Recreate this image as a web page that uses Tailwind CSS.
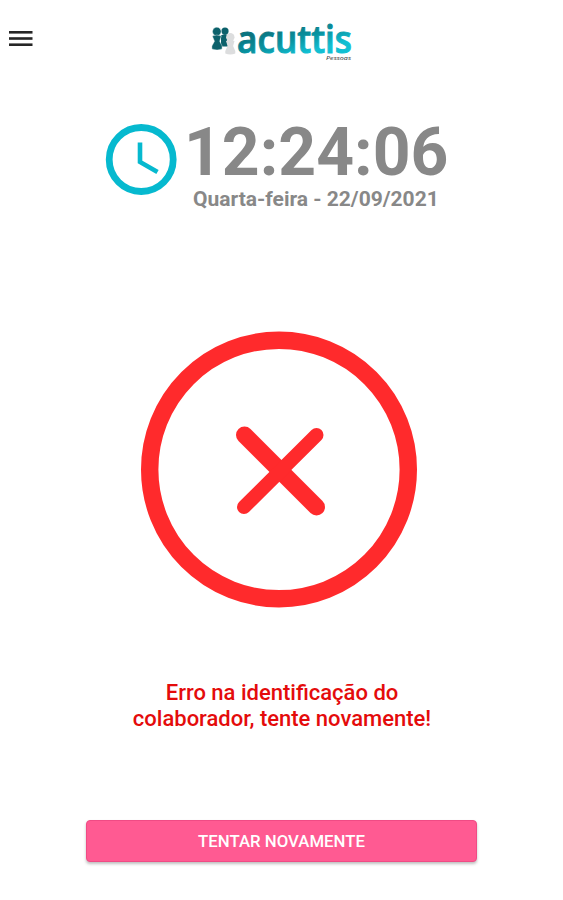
<!DOCTYPE html>
<html lang="pt-BR">

<head>
    <meta charset="UTF-8">
    <meta name="viewport" content="width=device-width, initial-scale=1.0">
    <title>Acuttis - Registro de Ponto</title>
    <script src="https://cdn.jsdelivr.net/npm/@tailwindcss/browser@4"></script>
</head>

<body class="min-h-screen bg-white font-['Roboto',sans-serif]">

    <!-- Header -->
    <header class="grid grid-cols-[200px_1fr_200px] h-[78px]">
        <button class="w-6 h-5 ml-[9px] mt-[29px]" aria-label="Menu">
            <svg viewBox="0 0 24 20" class="block w-6 h-5" fill="#262626">
                <rect x="0" y="2" width="23.5" height="2.6" />
                <rect x="0" y="8.2" width="23.5" height="2.6" />
                <rect x="0" y="14.4" width="23.5" height="2.6" />
            </svg>
        </button>

        <!-- Logo -->
        <svg viewBox="200 15 163 55" class="block w-[163px] h-[55px] mt-[15px] overflow-visible">
            <defs>
                <linearGradient id="logoGradient" gradientUnits="userSpaceOnUse" x1="285" y1="26" x2="293" y2="56">
                    <stop offset="0" stop-color="#0a7480" />
                    <stop offset="0.5" stop-color="#0892a0" />
                    <stop offset="1" stop-color="#12bfd2" />
                </linearGradient>
            </defs>
            <g fill="#0c616b">
                <circle cx="225" cy="31" r="3.6" />
                <path d="M221 35.5q4-3 8 0l-2 5 1 6h-7z" />
                <g stroke="#fff" stroke-width="0.4">
                    <circle cx="216.8" cy="31.5" r="4.3" />
                    <path d="M212.3 36q4.5-2 9 0l-1.6 5.2 2.4 4.8v3q-5 2-10.2 0v-3l2.6-4.8z" />
                </g>
            </g>
            <g fill="#dcddde">
                <circle cx="230.3" cy="37.2" r="4.2" />
                <path d="M226 41q4-2 8.5 0l-1.4 5 2.2 5v2.6q-5 2-10 0V51l2.3-5z" />
            </g>
            <text x="237" y="53.2" textLength="115" lengthAdjust="spacingAndGlyphs" fill="url(#logoGradient)"
                stroke="url(#logoGradient)" stroke-width="1" font-family="Open Sans, sans-serif" font-size="38"
                font-weight="600">acuttis</text>
            <text x="326" y="59.5" textLength="25" lengthAdjust="spacingAndGlyphs" fill="#333"
                font-family="Open Sans, sans-serif" font-size="5" font-style="italic">Pessoas</text>
        </svg>
    </header>

    <main class="flex flex-col items-center">

        <!-- Clock -->
        <section class="flex gap-[7px] mt-[46px] w-[351px] h-[90px] text-[#888]">
            <svg viewBox="0 0 71 71" class="block shrink-0 w-[71px] h-[71px] overflow-visible" fill="none"
                stroke="#06b9cf">
                <circle cx="35.2" cy="35.5" r="32" stroke-width="6.8" />
                <path d="M34 18.5v19.5l17.5 10" stroke-width="4.6" />
            </svg>
            <div class="whitespace-nowrap">
                <div class="text-[66px] leading-[58px] font-bold">12:24:06</div>
                <div class="ml-[9px] text-[21px] leading-[24px] mt-[5px] font-bold">Quarta-feira - 22/09/2021</div>
            </div>
        </section>

        <!-- Error icon -->
        <svg viewBox="0 0 276 276" class="block w-[276px] h-[276px] mt-[117px] mr-[5px] overflow-visible" fill="none"
            stroke="#ff2a2c" stroke-linecap="round">
            <circle cx="138" cy="138.5" r="129.3" stroke-width="17.4" />
            <path d="M103.5 104L175.5 176" stroke-width="17" />
            <path d="M175.5 104L103 176" stroke-width="14" />
        </svg>

        <!-- Error message -->
        <p class="mt-[73px] ml-px text-center text-[22px] leading-[26px] font-medium text-[#e40b0b]">
            Erro na identificação do<br>
            colaborador, tente novamente!
        </p>

        <button
            class="mt-[88px] w-[391px] h-[42px] pt-0.5 rounded bg-[#ff5a92] border border-[#f04b85] text-white text-[16.8px] font-medium shadow-[0_2px_3px_rgba(0,0,0,0.25)]">
            TENTAR NOVAMENTE
        </button>
    </main>

</body>

</html>
